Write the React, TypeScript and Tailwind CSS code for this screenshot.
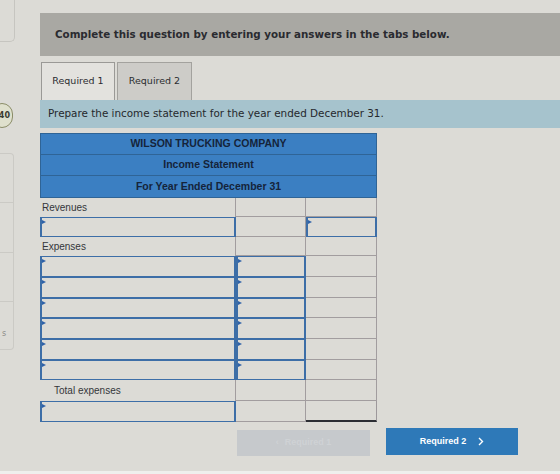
import React from "react";

type Cell = "label" | "gray" | "input" | "total";

function Marker() {
  return (
    <span className="absolute left-0 top-[2px] h-0 w-0 border-y-[2.5px] border-l-[4px] border-y-transparent border-l-[#2f62a8]" />
  );
}

function InputCell() {
  return <div className="relative h-full border-x-2 border-y border-[#3d6ea7]"><Marker /></div>;
}

function GrayCell({ total = false }: { total?: boolean }) {
  return (
    <div
      className={
        total
          ? "h-full border-r border-b-2 border-r-[#9d989b] border-b-[#2b2d33]"
          : "h-full border-r border-b border-[#a29d9f]"
      }
    />
  );
}

function Row({
  h,
  c1,
  c2,
  c3,
  label,
  indent = false,
}: {
  h: string;
  c1: Cell;
  c2: Cell;
  c3: Cell;
  label?: string;
  indent?: boolean;
}) {
  return (
    <div className={`grid grid-cols-[196px_70px_71px] ${h}`}>
      {c1 === "label" ? (
        <div
          className={`flex items-center border-r border-[#a29d9f] ${indent ? "pl-[14px]" : "pl-[2px]"} font-['Liberation_Sans',Arial,sans-serif] text-[10px] text-[#34363a]`}
        >
          {label}
        </div>
      ) : (
        <InputCell />
      )}
      {c2 === "input" ? <InputCell /> : <GrayCell />}
      {c3 === "input" ? <InputCell /> : c3 === "total" ? <GrayCell total /> : <GrayCell />}
    </div>
  );
}

function Statement() {
  const head = ["WILSON TRUCKING COMPANY", "Income Statement", "For Year Ended December 31"];
  const expenseHeights = ["h-[21px]", "h-[21px]", "h-[20px]", "h-[21px]", "h-[21px]", "h-[20px]"];
  return (
    <div className="mt-[5px] w-[337px]">
      <div className="border border-[#2f6496] bg-[#3b7fc2] font-['Liberation_Sans',Arial,sans-serif] text-[10.5px] font-bold text-[#15243a]">
        {head.map((t, i) => (
          <div
            key={t}
            className={`flex h-[21px] items-center justify-center ${i < 2 ? "border-b border-[#2f6496]" : ""}`}
          >
            {t}
          </div>
        ))}
      </div>
      <Row h="h-[19px]" c1="label" c2="gray" c3="gray" label="Revenues" />
      <Row h="h-[20px]" c1="input" c2="gray" c3="input" />
      <Row h="h-[19px]" c1="label" c2="gray" c3="gray" label="Expenses" />
      {expenseHeights.map((h, i) => (
        <Row key={i} h={h} c1="input" c2="input" c3="gray" />
      ))}
      <Row h="h-[21px]" c1="label" c2="gray" c3="gray" label="Total expenses" indent />
      <Row h="h-[21px]" c1="input" c2="gray" c3="total" />
    </div>
  );
}

function LeftRail() {
  return (
    <aside className="flex w-[40px] shrink-0 flex-col">
      <div className="h-[42px] w-[15px] rounded-br-[5px] border-r border-b border-[#c6c5c0]" />
      <div className="-ml-[9px] mt-[61px] flex h-[25px] w-[22px] items-center justify-end rounded-full border-[1.5px] border-[#8b8d68] bg-[#dfe0cd] pr-[2px] text-[8px] font-bold text-[#3a3b30]">
        40
      </div>
      <div className="mt-[25px] flex h-[197px] w-[14px] flex-col rounded-r-[4px] border-y border-r border-[#cbcac5]">
        <div className="h-[49px] border-b border-[#cbcac5]" />
        <div className="h-[50px] border-b border-[#cbcac5]" />
        <div className="h-[49px] border-b border-[#cbcac5]" />
        <div className="flex flex-1 items-end pb-[9px] pl-[2px] text-[8px] text-[#8e8d89]">s</div>
      </div>
    </aside>
  );
}

export default function App() {
  return (
    <div className="flex h-[474px] w-[560px] flex-col overflow-hidden bg-[#dcdbd6] font-['DejaVu_Sans',Verdana,sans-serif]">
      <div className="flex h-[471px]">
        <LeftRail />
        <main className="flex flex-1 flex-col pt-[13px]">
          <div className="flex h-[43px] items-center bg-[#a9a8a3] pl-[15px] text-[10.3px] font-bold text-[#2a2b30]">
            Complete this question by entering your answers in the tabs below.
          </div>
          <div className="mt-[6px] flex h-[38px] gap-[2px] pl-px">
            <div className="flex w-[74px] items-center justify-center border-x border-t border-[#9a9996] bg-[#e3e2de] text-[9.5px] text-[#2b2c30]">
              Required 1
            </div>
            <div className="flex w-[75px] items-center justify-center border-x border-t border-[#a3a29e] bg-[#cdccc8] text-[9.5px] text-[#2b2c30]">
              Required 2
            </div>
          </div>
          <div className="flex h-[28px] items-center bg-[#a6c3cd] pl-[8px] text-[10.4px] text-[#25282c]">
            Prepare the income statement for the year ended December 31.
          </div>
          <Statement />
          <div className="mt-[6px] flex items-start pl-[197px] font-['Liberation_Sans',Arial,sans-serif] text-[9px] font-bold">
            <div className="mt-[2px] flex h-[26px] w-[133px] items-center justify-center gap-[6px] bg-[#c6c9cc] text-[#cfd2d5]">
              <span>&lsaquo;</span>
              <span>Required 1</span>
            </div>
            <div className="ml-[16px] flex h-[27px] w-[132px] items-center justify-center gap-[12px] bg-[#2e79b8] text-white">
              <span>Required 2</span>
              <svg width="6" height="9" viewBox="0 0 6 9" fill="none">
                <path d="M1 1l3.5 3.5L1 8" stroke="white" strokeWidth="1.4" />
              </svg>
            </div>
          </div>
        </main>
      </div>
      <div className="h-[3px] bg-[#efefed]" />
    </div>
  );
}
